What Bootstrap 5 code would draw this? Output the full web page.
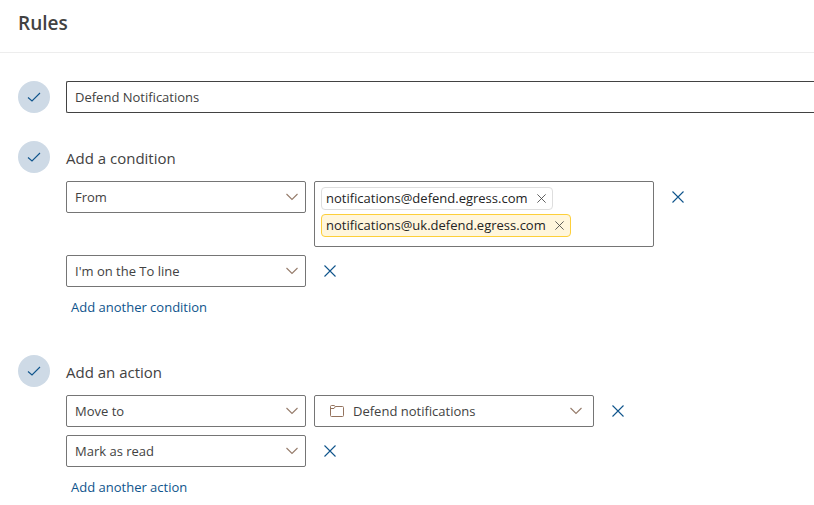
<!DOCTYPE html>
<html lang="en">
<head>
<meta charset="utf-8">
<meta name="viewport" content="width=device-width, initial-scale=1">
<title>Rules</title>
<link href="https://cdn.jsdelivr.net/npm/bootstrap@5.3.0/dist/css/bootstrap.min.css" rel="stylesheet">
<style>
body { font-family: "Open Sans", "Noto Sans", sans-serif; font-size: 13px; line-height: 20px; color: #424242; background: #fff; overflow-x: hidden; }
.page-head { padding: 9px 18px 15px; border-bottom: 1px solid #ededed; }
.page-head h1 { font-size: 19px; line-height: 28px; font-weight: 600; }
.rule-form { padding: 28px 0 0 18px; }
.step { display: flex; gap: 16px; }
.action-step { padding-top: 14px; }
.step-dot { width: 32px; height: 32px; background: #cedae6; color: #0f548c; }
.step-title { font-size: 15px; line-height: 24px; padding-top: 5px; margin-bottom: 11px; }
.field { height: 32px; padding: 0 32px 0 8px; font-size: 13px; line-height: 20px; color: #424242; border: 1px solid #757575; border-radius: 2px; }
.rule-name { border-color: #424242; border-right: 0; border-radius: 2px 0 0 2px; }
.pick { width: 240px; background-image: url("data:image/svg+xml,%3Csvg xmlns='http://www.w3.org/2000/svg' viewBox='0 0 12 8'%3E%3Cpath d='M.5 1 6 6.500 11.500 1' fill='none' stroke='%23957b6a' stroke-width='1.1'/%3E%3C/svg%3E"); background-size: 12px 8px; background-position: right 7px center; }
.pick-folder { width: 280px; padding-left: 38px; background-image: url("data:image/svg+xml,%3Csvg xmlns='http://www.w3.org/2000/svg' viewBox='0 0 12 8'%3E%3Cpath d='M.5 1 6 6.500 11.500 1' fill='none' stroke='%23957b6a' stroke-width='1.1'/%3E%3C/svg%3E"), url("data:image/svg+xml,%3Csvg xmlns='http://www.w3.org/2000/svg' viewBox='0 0 14 14'%3E%3Cpath d='M.5 11.500v-9a1 1 0 0 1 1-1h2.500l1.500 1h7a1 1 0 0 1 1 1v8a1 1 0 0 1-1 1h-11a1 1 0 0 1-1-1zM.5 4.500h3.500l1.500-2' fill='none' stroke='%2394735e'/%3E%3C/svg%3E"); background-size: 12px 8px, 14px 14px; background-position: right 11px center, 15px center; }
.people { width: 340px; min-height: 66px; padding: 5px 6px; border: 1px solid #757575; border-radius: 2px; }
.person { height: 23px; padding: 0 5px 2px 4px; gap: 8px; font-size: 13px; color: #242424; border: 1px solid #dedede; border-radius: 4px; }
.person-warn { background: #fff6dc; border-color: #fdcf3a; }
.icon-btn { display: flex; align-items: center; justify-content: center; padding: 0; border: 0; background: none; color: #0f548c; }
.remove { width: 32px; height: 32px; }
.drop { width: 11px; height: 20px; padding-top: 2px; color: #424242; }
.add-link { color: #0f548c; padding: 0 5px; margin-top: 2px; text-decoration: none; }
</style>
<script src="https://cdn.jsdelivr.net/npm/bootstrap@5.3.0/dist/js/bootstrap.bundle.min.js" defer></script>
</head>
<body>
<svg class="d-none" aria-hidden="true">
  <symbol id="check" viewBox="0 0 14 14"><path d="M1 7.500 5 11 13 3" fill="none" stroke="currentColor" stroke-width="1.1"/></symbol>
  <symbol id="cross" viewBox="0 0 12 12"><path d="M.5.5l11 11M11.500.5l-11 11" fill="none" stroke="currentColor" stroke-width="1.1"/></symbol>
</svg>
<header class="page-head"><h1 class="mb-0">Rules</h1></header>
<main>
<form class="rule-form d-flex flex-column">
  <div class="step">
    <span class="step-dot rounded-circle d-flex align-items-center justify-content-center flex-shrink-0"><svg width="14" height="14"><use href="#check"/></svg></span>
    <input type="text" class="form-control field rule-name" value="Defend Notifications" aria-label="Rule name">
  </div>

  <section class="step mt-4 pt-1">
    <span class="step-dot rounded-circle d-flex align-items-center justify-content-center flex-shrink-0"><svg width="14" height="14"><use href="#check"/></svg></span>
    <div class="flex-grow-1">
      <h2 class="step-title fw-normal">Add a condition</h2>
      <div class="d-flex flex-column align-items-start gap-2">
        <div class="d-flex gap-2">
          <select class="form-select field pick" aria-label="Condition 1"><option>From</option></select>
          <div class="people d-flex flex-column align-items-start gap-1">
            <span class="person d-flex align-items-center">notifications@defend.egress.com <button type="button" class="icon-btn drop" aria-label="Remove notifications@defend.egress.com"><svg width="9" height="9"><use href="#cross"/></svg></button></span>
            <span class="person person-warn d-flex align-items-center">notifications@uk.defend.egress.com <button type="button" class="icon-btn drop" aria-label="Remove notifications@uk.defend.egress.com"><svg width="9" height="9"><use href="#cross"/></svg></button></span>
          </div>
          <button type="button" class="icon-btn remove" aria-label="Remove condition 1"><svg width="12" height="12"><use href="#cross"/></svg></button>
        </div>
        <div class="d-flex gap-2">
          <select class="form-select field pick" aria-label="Condition 2"><option>I'm on the To line</option></select>
          <button type="button" class="icon-btn remove" aria-label="Remove condition 2"><svg width="12" height="12"><use href="#cross"/></svg></button>
        </div>
        <a href="#" class="add-link">Add another condition</a>
      </div>
    </div>
  </section>

  <section class="step action-step mt-4">
    <span class="step-dot rounded-circle d-flex align-items-center justify-content-center flex-shrink-0"><svg width="14" height="14"><use href="#check"/></svg></span>
    <div class="flex-grow-1">
      <h2 class="step-title fw-normal">Add an action</h2>
      <div class="d-flex flex-column align-items-start gap-2">
        <div class="d-flex gap-2">
          <select class="form-select field pick" aria-label="Action 1"><option>Move to</option></select>
          <select class="form-select field pick-folder" aria-label="Folder"><option>Defend notifications</option></select>
          <button type="button" class="icon-btn remove" aria-label="Remove action 1"><svg width="12" height="12"><use href="#cross"/></svg></button>
        </div>
        <div class="d-flex gap-2">
          <select class="form-select field pick" aria-label="Action 2"><option>Mark as read</option></select>
          <button type="button" class="icon-btn remove" aria-label="Remove action 2"><svg width="12" height="12"><use href="#cross"/></svg></button>
        </div>
        <a href="#" class="add-link">Add another action</a>
      </div>
    </div>
  </section>
</form>
</main>
</body>
</html>
